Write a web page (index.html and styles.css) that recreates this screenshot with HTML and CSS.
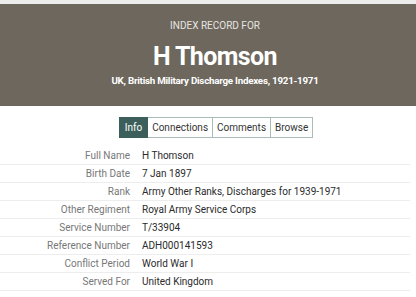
FILE: index.html
```html
<!DOCTYPE html>
<html lang="en">
<head>
	<meta charset="UTF-8">
	<title>H Thomson - Index Record</title>
	<link rel="stylesheet" href="styles.css">
</head>
<body>
	<div class="header">
		<p class="kicker">INDEX RECORD FOR</p>
		<h1>H Thomson</h1>
		<p class="source">UK, British Military Discharge Indexes, 1921-1971</p>
	</div>

	<div class="tabs">
		<span class="tab active">Info</span>
		<span class="tab">Connections</span>
		<span class="tab">Comments</span>
		<span class="tab">Browse</span>
	</div>

	<div class="facts">
		<div class="row"><span class="label">Full Name</span><span class="value">H Thomson</span></div>
		<div class="row"><span class="label">Birth Date</span><span class="value">7 Jan 1897</span></div>
		<div class="row"><span class="label">Rank</span><span class="value">Army Other Ranks, Discharges for 1939-1971</span></div>
		<div class="row"><span class="label">Other Regiment</span><span class="value">Royal Army Service Corps</span></div>
		<div class="row"><span class="label">Service Number</span><span class="value">T/33904</span></div>
		<div class="row"><span class="label">Reference Number</span><span class="value">ADH000141593</span></div>
		<div class="row"><span class="label">Conflict Period</span><span class="value">World War I</span></div>
		<div class="row"><span class="label">Served For</span><span class="value">United Kingdom</span></div>
	</div>
</body>
</html>
```

FILE: styles.css
```css
*{
	margin: 0;
	padding: 0;
	box-sizing: border-box;
}
body{
	background-color: #fff;
	font-family: Roboto, "Liberation Sans", sans-serif;
	border-top: 4px solid #ececec;
}

/* header */
.header{
	background-color: #6d675e;
	color: #fff;
	text-align: center;
	height: 102px;
	padding-top: 16px;
	padding-left: 14px;
}
.kicker{
	font-size: 10px;
	color: #e8e5e0;
	line-height: 12px;
}
.header h1{
	font-size: 25px;
	font-weight: 700;
	line-height: 30px;
	margin-top: 10px;
	letter-spacing: -0.6px;
}
.source{
	font-size: 9.8px;
	font-weight: 700;
	line-height: 12px;
	margin-top: 3px;
	letter-spacing: -0.25px;
}

/* tabs */
.tabs{
	display: flex;
	justify-content: center;
	margin-top: 11px;
	margin-bottom: 9px;
	padding-left: 16px;
}
.tab{
	font-size: 10px;
	color: #333;
	line-height: 19px;
	padding: 0 4px;
	border: 1px solid #a9bcba;
	border-left: none;
}
.tab:first-child{
	border-left: 1px solid #a9bcba;
	padding: 0 5px;
}
.tab.active{
	background-color: #3d5f5c;
	border-color: #3d5f5c;
	color: #fff;
}

/* facts table */
.row{
	display: flex;
	height: 18px;
	align-items: center;
	border-bottom: 1px solid #ededed;
	font-size: 10px;
	margin-right: 6px;
}
.label{
	width: 130px;
	text-align: right;
	color: #777;
}
.value{
	margin-left: 12px;
	color: #2b2b2b;
}
```
